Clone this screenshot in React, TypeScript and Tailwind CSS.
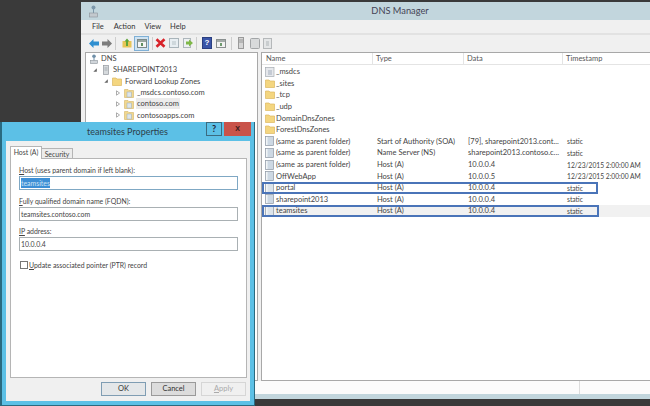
import type { ReactNode } from "react";

function Folder() {
  return (
    <svg width="10" height="9" viewBox="0 0 10 9" className="shrink-0">
      <path d="M0.5 1h3.5l1 1h4.500v6.500h-9z" fill="#f4d680" stroke="#dcb860" strokeWidth="0.7" />
    </svg>
  );
}
function Rec({ dim }: { dim?: boolean }) {
  return (
    <svg width="9" height="10" viewBox="0 0 9 10" className="shrink-0">
      <rect x="0.5" y="0.5" width="8" height="9" fill={dim ? "#dde4ea" : "#cdd8e3"} stroke="#8d98a3" strokeWidth="0.7" />
      <rect x="1" y="1" width="1.500" height="8" fill="#f2f5f7" />
    </svg>
  );
}
function Doc() {
  return (
    <svg width="10" height="10" viewBox="0 0 10 10" className="shrink-0">
      <rect x="0.5" y="0.5" width="8.500" height="9" fill="#e6e8ec" stroke="#a5abb3" strokeWidth="0.7" />
      <rect x="3" y="3" width="4" height="5" fill="#c5cbd4" />
    </svg>
  );
}
function Zone() {
  return (
    <svg width="10" height="10" viewBox="0 0 10 10" className="shrink-0">
      <path d="M0.5 1.500h3.500l1 1h4.500v7h-9z" fill="#f2d88e" stroke="#d2b468" strokeWidth="0.6" />
      <rect x="3" y="4" width="4.500" height="5" fill="#dde5ea" stroke="#9aabb8" strokeWidth="0.5" />
    </svg>
  );
}
function Arrow() {
  return (
    <svg width="4" height="6" viewBox="0 0 4 6" className="shrink-0">
      <path d="M0.500 0.800l3 2.200-3 2.200z" fill="#fff" stroke="#8a8a8a" strokeWidth="0.7" />
    </svg>
  );
}
function Down() {
  return (
    <svg width="4" height="4" viewBox="0 0 4 4" className="shrink-0">
      <path d="M3.800 0.300v3.500h-3.500z" fill="#666" />
    </svg>
  );
}
function Sep({ cls }: { cls: string }) {
  return <div className={`w-px h-[13px] bg-[#cdcdcd] ${cls}`} />;
}

function Toolbar() {
  return (
    <div className="h-[17px] bg-[#f0f0f0] flex items-center pl-[8px] pb-[1px]">
      <svg width="10" height="9" viewBox="0 0 10 9"><path d="M0 4.500l4.500-4.500v2.500h5.500v4h-5.500v2.500z" fill="#2f8fd0" /></svg>
      <svg width="10" height="9" viewBox="0 0 10 9" className="ml-[3px]"><path d="M10 4.500l-4.500-4.500v2.500h-5.500v4h5.500v2.500z" fill="#7d7d7d" /></svg>
      <Sep cls="ml-[3px]" />
      <svg width="10" height="10" viewBox="0 0 10 10" className="ml-[6px]"><path d="M0.500 3h9v6.500h-9z" fill="#e7c658" /><path d="M4 8V3.500H2.500L5 0.500l2.500 3H6V8z" fill="#5fa63c" /></svg>
      <div className="ml-[2px] w-[15px] h-[15px] bg-[#cfe3f2] border border-[#7fb0d6] flex items-center justify-center">
        <svg width="10" height="9" viewBox="0 0 10 9"><rect x="0.500" y="0.500" width="9" height="8" fill="#f5f5f5" stroke="#7d8a8a" /><rect x="1" y="1" width="8" height="2" fill="#9aa7a0" /><rect x="4" y="4" width="2" height="3" fill="#5f8f5f" /></svg>
      </div>
      <Sep cls="ml-[3px]" />
      <svg width="11" height="10" viewBox="0 0 11 10" className="ml-[2px]"><path d="M1.500 1.200l8 7.600M9.500 1.200l-8 7.600" stroke="#d8232a" strokeWidth="2.600" /></svg>
      <svg width="10" height="10" viewBox="0 0 10 10" className="ml-[3px]"><rect x="0.500" y="0.500" width="9" height="9" fill="#e8eef2" stroke="#a9b4ba" /><rect x="3" y="3" width="4" height="4" fill="#cfd8dc" /></svg>
      <svg width="10" height="10" viewBox="0 0 10 10" className="ml-[4px]"><rect x="0.500" y="0.500" width="7" height="9" fill="#eef1f3" stroke="#adb6bb" /><path d="M3 3.500h3V1.500L10 5 6 8.500v-2H3z" fill="#7fb848" /></svg>
      <Sep cls="ml-[3px]" />
      <div className="ml-[5px] w-[10px] h-[12px] bg-[#3a55a8] border border-[#2b3f80] text-white text-[8px] leading-[10px] font-bold text-center font-['Liberation_Sans',sans-serif]">?</div>
      <svg width="10" height="9" viewBox="0 0 10 9" className="ml-[4px]"><rect x="0.500" y="0.500" width="9" height="8" fill="#f2f2f2" stroke="#8a9090" /><rect x="1" y="1" width="8" height="2" fill="#a3aba8" /><rect x="4" y="4" width="2" height="3" fill="#6e9a6e" /></svg>
      <Sep cls="ml-[5px]" />
      <svg width="6" height="12" viewBox="0 0 6 12" className="ml-[6px]"><rect x="0.500" y="0.500" width="5" height="11" fill="#d6d6d6" stroke="#9a9a9a" /><path d="M1 3h4M1 5h4" stroke="#888" strokeWidth="0.8" /></svg>
      <svg width="10" height="11" viewBox="0 0 10 11" className="ml-[6px]"><rect x="0.500" y="0.500" width="9" height="10" rx="1" fill="#d8dadb" stroke="#a2a5a7" /></svg>
      <svg width="9" height="11" viewBox="0 0 9 11" className="ml-[3px]"><rect x="0.500" y="0.500" width="8" height="10" fill="#e4e6e7" stroke="#b5b8ba" /><rect x="3" y="3" width="3" height="5" fill="#c9cdcf" /></svg>
    </div>
  );
}

function TreeRow({ indent, tw, iw, toggle, icon, label, sel }: { indent: string; tw: string; iw: string; toggle: ReactNode; icon: ReactNode; label: string; sel?: boolean }) {
  return (
    <div className={`h-[11.3px] flex items-center whitespace-nowrap ${indent}`}>
      <span className={`flex shrink-0 ${tw}`}>{toggle}</span>
      <span className={`flex shrink-0 ${iw}`}>{icon}</span>
      <span className={`px-[1px] -ml-[1px] leading-[11px] ${sel ? "bg-[#ececec]" : ""}`}>{label}</span>
    </div>
  );
}

const rows: { name: string; type?: string; data?: string; ts?: string; kind: "doc" | "folder" | "rec"; box?: string; sel?: boolean }[] = [
  { name: "_msdcs", kind: "doc" },
  { name: "_sites", kind: "folder" },
  { name: "_tcp", kind: "folder" },
  { name: "_udp", kind: "folder" },
  { name: "DomainDnsZones", kind: "folder" },
  { name: "ForestDnsZones", kind: "folder" },
  { name: "(same as parent folder)", type: "Start of Authority (SOA)", data: "[79], sharepoint2013.cont...", ts: "static", kind: "rec" },
  { name: "(same as parent folder)", type: "Name Server (NS)", data: "sharepoint2013.contoso.c...", ts: "static", kind: "rec" },
  { name: "(same as parent folder)", type: "Host (A)", data: "10.0.0.4", ts: "12/23/2015 2:00:00 AM", kind: "rec" },
  { name: "OffWebApp", type: "Host (A)", data: "10.0.0.5", ts: "12/23/2015 2:00:00 AM", kind: "rec" },
  { name: "portal", type: "Host (A)", data: "10.0.0.4", ts: "static", kind: "rec", box: "w-[336px]" },
  { name: "sharepoint2013", type: "Host (A)", data: "10.0.0.4", ts: "static", kind: "rec" },
  { name: "teamsites", type: "Host (A)", data: "10.0.0.4", ts: "static", kind: "rec", box: "w-[337px]", sel: true },
];

function Field({ ul, rest, value, focus, selected }: { ul: string; rest: string; value: string; focus?: boolean; selected?: boolean }) {
  return (
    <div className="flex flex-col">
      <div className="h-[12px] leading-[12px] whitespace-nowrap"><span className="underline">{ul}</span>{rest}</div>
      <div className={`h-[14px] border ${focus ? "border-[#7fa8c4]" : "border-[#a9b0b3]"} bg-white flex items-center px-[1px]`}>
        <span className={`leading-[10px] ${selected ? "bg-[#3d8fd6] text-[#cfe4f5]" : ""}`}>{value}</span>
      </div>
    </div>
  );
}

export default function App() {
  return (
    <div className="relative w-[650px] h-[406px] overflow-hidden bg-[#3a3a3a] font-['Lato','Open_Sans',sans-serif] text-[7.5px] text-[#444]">
      <div className="absolute left-[81px] top-[2px] w-[569px] h-[397px] flex flex-col bg-[#c2d6dd] pb-[5px]">
        <div className="h-[18px] shrink-0 flex items-center justify-center pl-[69px] relative text-[9.25px] text-[#445]">
          <svg width="9" height="13" viewBox="0 0 9 13" className="absolute left-[8px] top-[3px]"><circle cx="4.500" cy="2.500" r="2" fill="#7d98ab" /><path d="M4.500 4v4" stroke="#7d98ab" /><rect x="0.500" y="8" width="8" height="4" fill="#c3c9ce" stroke="#8a9299" strokeWidth="0.6" /></svg>
          <span>DNS Manager</span>
        </div>
        <div className="h-[13px] shrink-0 bg-[#f0f0f0] flex items-center pl-[11px] text-[#333]">
          <span>File</span><span className="ml-[10px]">Action</span><span className="ml-[9px]">View</span><span className="ml-[9px]">Help</span>
        </div>
        <div className="h-[2px] shrink-0 bg-[#e2e2e2]" />
        <Toolbar />
        <div className="flex-1 min-h-0 bg-[#f0f0f0] flex pl-[4px] gap-[3px]">
          <div className="w-[173px] bg-white border border-[#a8a8a8] pl-[4px] flex flex-col">
            <div className="h-[11.3px] flex items-center">
              <svg width="8" height="10" viewBox="0 0 8 10" className="shrink-0"><circle cx="4" cy="2.200" r="1.800" fill="#6f8fa8" /><path d="M4 3.500v3" stroke="#6f8fa8" /><rect x="0.500" y="6.500" width="7" height="3" fill="#d0d5da" stroke="#8a9299" strokeWidth="0.6" /></svg>
              <span className="ml-[3px]">DNS</span>
            </div>
            <TreeRow indent="pl-[3px]" tw="w-[10px]" iw="w-[10px]" toggle={<Down />} icon={<svg width="6" height="10" viewBox="0 0 6 10"><rect x="0.500" y="0.500" width="5" height="9" fill="#d6dadd" stroke="#93999e" strokeWidth="0.7" /><path d="M1.500 3h3M1.500 5h3" stroke="#8c9297" strokeWidth="0.6" /></svg>} label="SHAREPOINT2013" />
            <TreeRow indent="pl-[14px]" tw="w-[8px]" iw="w-[13px]" toggle={<Down />} icon={<Folder />} label="Forward Lookup Zones" />
            <TreeRow indent="pl-[26px]" tw="w-[8px]" iw="w-[13px]" toggle={<Arrow />} icon={<Zone />} label="_msdcs.contoso.com" />
            <TreeRow indent="pl-[26px]" tw="w-[8px]" iw="w-[13px]" toggle={<Arrow />} icon={<Zone />} label="contoso.com" sel />
            <TreeRow indent="pl-[26px]" tw="w-[8px]" iw="w-[13px]" toggle={<Arrow />} icon={<Zone />} label="contosoapps.com" />
          </div>
          <div className="flex-1 min-w-0 bg-white border border-r-0 border-[#a8a8a8] flex flex-col">
            <div className="h-[12px] flex items-center border-b border-[#e4e4e4] text-[#555] shrink-0 whitespace-nowrap">
              <span className="w-[111px] pl-[4px] border-r border-[#e4e4e4]">Name</span>
              <span className="w-[91px] pl-[3px] border-r border-[#e4e4e4]">Type</span>
              <span className="w-[99px] pl-[3px] border-r border-[#e4e4e4]">Data</span>
              <span className="pl-[3px]">Timestamp</span>
            </div>
            <div className="flex flex-col pt-[1px]">
              {rows.map((r, i) => (
                <div key={i} className={`relative h-[11.6px] flex items-center whitespace-nowrap ${r.sel ? "bg-[#f1f1f1]" : ""}`}>
                  <span className="w-[111px] pl-[3px] flex items-center shrink-0">
                    <span className="w-[11px] flex shrink-0">
                      {r.kind === "folder" ? <Folder /> : r.kind === "doc" ? <Doc /> : <Rec dim={r.box !== undefined} />}
                    </span>
                    <span className="leading-[11px]">{r.name}</span>
                  </span>
                  <span className="w-[91px] pl-[4px] shrink-0">{r.type}</span>
                  <span className="w-[99px] pl-[4px] shrink-0">{r.data}</span>
                  <span className="pl-[4px] text-[6.7px]">{r.ts}</span>
                  {r.box && <div className={`absolute left-0 top-0 h-[12px] ${r.box} border-2 border-[#4a74b8]`} />}
                </div>
              ))}
            </div>
          </div>
        </div>
        <div className="h-[13px] shrink-0 bg-[#fbfbfb] flex">
          <div className="w-[499px] border-r border-[#dcdcdc]" />
        </div>
      </div>

      <div className="absolute left-0 top-[122px] w-[255px] h-[284px] bg-[#5cc0e6] border-l-2 border-r border-b border-[#2a6a80] pl-[4px] pr-[4px] pb-[4px] flex flex-col text-[6.9px]">
        <div className="h-[19px] flex items-center justify-center relative text-[#2e3f4a] text-[9px] shrink-0">
          <span className="mr-[1px]">teamsites Properties</span>
          <div className="absolute right-[-1px] top-0 flex gap-[2px]">
            <div className="w-[16px] h-[14px] bg-[#5cc0e6] border border-[#3b6b80] text-center text-[9px] leading-[12px] font-bold text-[#223]">?</div>
            <div className="w-[27px] h-[14px] bg-[#c9534a] text-center text-[9px] leading-[12px] font-bold text-[#402020]">x</div>
          </div>
        </div>
        <div className="flex-1 min-h-0 bg-[#f0f0f0] flex flex-col pl-[4px] pr-[3px] pt-[5px]">
          <div className="flex h-[12px] shrink-0 items-end">
            <div className="h-[13px] w-[32px] bg-white border border-b-0 border-[#b5b5b5] text-center leading-[11px] z-10 -mb-px">Host (A)</div>
            <div className="h-[10px] w-[31px] bg-[#ececec] border border-b-0 border-l-0 border-[#b5b5b5] text-center leading-[10px]">Security</div>
          </div>
          <div className="flex-1 min-h-0 bg-white border border-[#b5b5b5] px-[8px] pt-[5px] flex flex-col">
            <Field ul="H" rest="ost (uses parent domain if left blank):" value="teamsites" focus selected />
            <div className="h-[5px] shrink-0" />
            <Field ul="F" rest="ully qualified domain name (FQDN):" value="teamsites.contoso.com" />
            <div className="h-[4px] shrink-0" />
            <Field ul="IP" rest=" address:" value="10.0.0.4" />
            <div className="flex items-center gap-[1px] mt-[9px] pl-[1px] whitespace-nowrap">
              <div className="w-[8px] h-[8px] bg-white border border-[#777]" />
              <span><span className="underline">U</span>pdate associated pointer (PTR) record</span>
            </div>
          </div>
          <div className="h-[23px] shrink-0 flex items-start pt-[4px] justify-end gap-[5px] pr-[1px] text-[7.5px]">
            <div className="w-[45px] h-[14px] bg-[#e4e7e9] border border-[#7f9db3] flex items-center justify-center text-[#333]">OK</div>
            <div className="w-[45px] h-[14px] bg-[#dcdcdc] border border-[#9a9a9a] flex items-center justify-center text-[#333]">Cancel</div>
            <div className="w-[45px] h-[14px] bg-[#f0f0f0] border border-[#d6d6d6] flex items-center justify-center text-[#aaa]"><span><span className="underline">A</span>pply</span></div>
          </div>
        </div>
      </div>
    </div>
  );
}
